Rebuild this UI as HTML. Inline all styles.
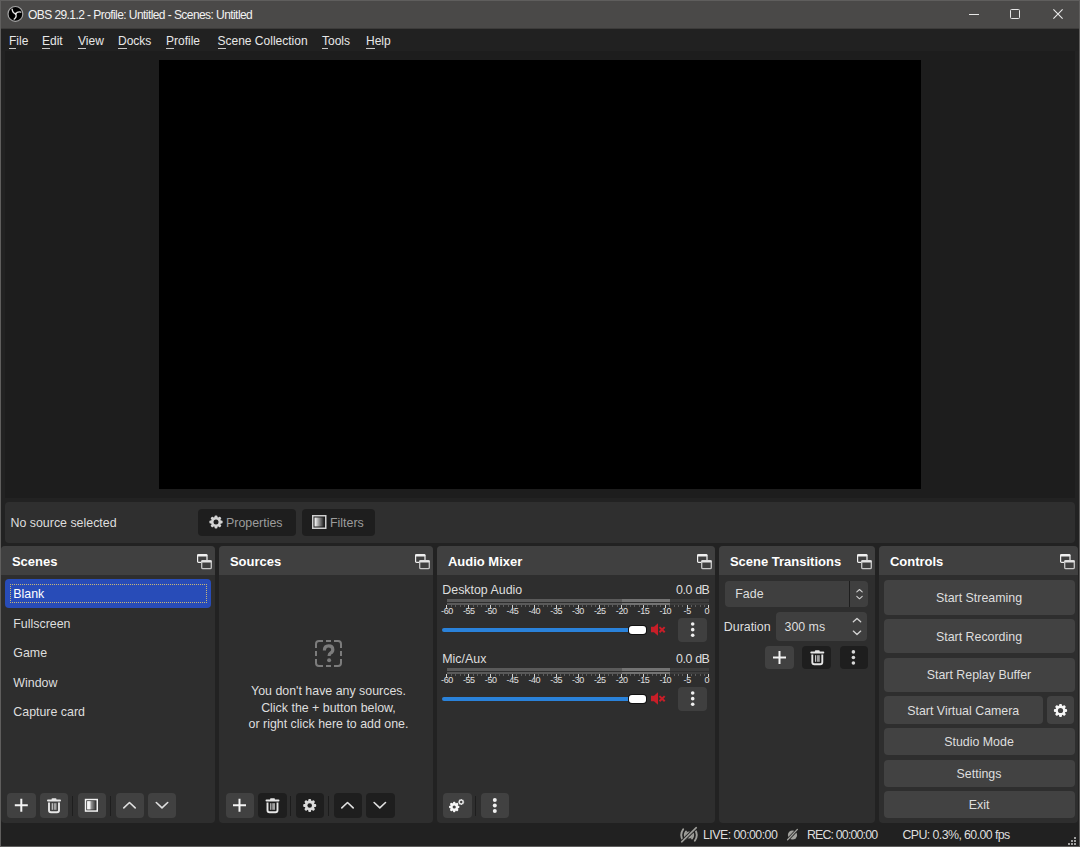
<!DOCTYPE html>
<html><head><meta charset="utf-8">
<style>
*{box-sizing:border-box;margin:0;padding:0}
html,body{width:1080px;height:847px;overflow:hidden;background:#222222}
body{position:relative;font-family:"Liberation Sans",sans-serif;color:#dedede;font-size:12.4px}
.a{position:absolute}
.t{position:absolute;white-space:nowrap}
</style></head><body>
<div class="a" style="left:0px;top:0px;width:1080px;height:28px;background:#4a4948"></div>
<div class="a" style="left:0px;top:28px;width:1080px;height:1px;background:#3c3b3a"></div>
<svg class="a" style="left:7px;top:5px;overflow:visible" width="18" height="19" viewBox="0 0 18 19"><g transform="translate(0.000 0.500)"><circle cx="8.4" cy="8.4" r="7.4" fill="#000" stroke="#a4a4a4" stroke-width="1.2"/>
<g fill="none" stroke="#e4e4e4" stroke-width="1.3" stroke-linecap="round">
<path d="M8.6 8.3 Q5.6 7.6 5.1 3.6"/>
<path d="M8.6 8.3 Q10.4 5.8 13.7 6.6"/>
<path d="M8.6 8.3 Q10.2 11.6 7.2 13.6"/>
</g><circle cx="8.6" cy="8.3" r="1.0" fill="#f0f0f0"/></g></svg>
<div class="t" style="left:28px;top:6.59px;font-size:12px;line-height:16px;color:#f2f2f2;letter-spacing:-0.57px">OBS 29.1.2 - Profile: Untitled - Scenes: Untitled</div>
<div class="a" style="left:969px;top:14px;width:10px;height:1px;background:#e6e6e6"></div>
<div class="a" style="left:1010px;top:9px;width:10px;height:10px;background:transparent;border-radius:1.5px;border:1px solid #e6e6e6"></div>
<svg class="a" style="left:1052px;top:8px;overflow:visible" width="13" height="13" viewBox="0 0 13 13"><g transform="translate(0.000 0.000)"><path d="M1.4 1.4L10.6 10.6M10.6 1.4L1.4 10.6" stroke="#ececec" stroke-width="1.1"/></g></svg>
<div class="a" style="left:0px;top:0px;width:1080px;height:847px;background:transparent;border:1px solid #5f5e5d;z-index:40"></div>
<div class="a" style="left:1px;top:29px;width:1078px;height:22px;background:#212121"></div>
<div class="t" style="left:9px;top:32.54px;font-size:12px;line-height:16px;color:#e8e8e8"><span style="border-bottom:1px solid #c8c8c8">F</span>ile</div>
<div class="t" style="left:42px;top:32.54px;font-size:12px;line-height:16px;color:#e8e8e8"><span style="border-bottom:1px solid #c8c8c8">E</span>dit</div>
<div class="t" style="left:78px;top:32.54px;font-size:12px;line-height:16px;color:#e8e8e8"><span style="border-bottom:1px solid #c8c8c8">V</span>iew</div>
<div class="t" style="left:118px;top:32.54px;font-size:12px;line-height:16px;color:#e8e8e8"><span style="border-bottom:1px solid #c8c8c8">D</span>ocks</div>
<div class="t" style="left:166px;top:32.54px;font-size:12px;line-height:16px;color:#e8e8e8"><span style="border-bottom:1px solid #c8c8c8">P</span>rofile</div>
<div class="t" style="left:217.5px;top:32.54px;font-size:12px;line-height:16px;color:#e8e8e8"><span style="border-bottom:1px solid #c8c8c8">S</span>cene Collection</div>
<div class="t" style="left:322px;top:32.54px;font-size:12px;line-height:16px;color:#e8e8e8"><span style="border-bottom:1px solid #c8c8c8">T</span>ools</div>
<div class="t" style="left:366px;top:32.54px;font-size:12px;line-height:16px;color:#e8e8e8"><span style="border-bottom:1px solid #c8c8c8">H</span>elp</div>
<div class="a" style="left:5px;top:51px;width:1070px;height:447px;background:#1d1d1d"></div>
<div class="a" style="left:159px;top:60px;width:762px;height:429px;background:#000000"></div>
<div class="a" style="left:5px;top:502px;width:1070px;height:41px;background:#2f2f2f;border-radius:4px"></div>
<div class="t" style="left:10.5px;top:514.70px;font-size:12.4px;line-height:16px">No source selected</div>
<div class="a" style="left:198px;top:509px;width:98px;height:27px;background:#1e1e1e;border-radius:4px"></div>
<div class="a" style="left:302px;top:509px;width:73px;height:27px;background:#1e1e1e;border-radius:4px"></div>
<svg class="a" style="left:209px;top:515px;overflow:visible" width="15" height="15" viewBox="0 0 15 15"><g transform="translate(0.000 0.000)"><circle cx="7" cy="7" r="5.0" fill="#d4d4d4"/><rect x="5.55" y="0.40" width="2.90" height="3.10" rx="1.02" fill="#d4d4d4" transform="rotate(0.0 7 7)"/><rect x="5.55" y="0.40" width="2.90" height="3.10" rx="1.02" fill="#d4d4d4" transform="rotate(45.0 7 7)"/><rect x="5.55" y="0.40" width="2.90" height="3.10" rx="1.02" fill="#d4d4d4" transform="rotate(90.0 7 7)"/><rect x="5.55" y="0.40" width="2.90" height="3.10" rx="1.02" fill="#d4d4d4" transform="rotate(135.0 7 7)"/><rect x="5.55" y="0.40" width="2.90" height="3.10" rx="1.02" fill="#d4d4d4" transform="rotate(180.0 7 7)"/><rect x="5.55" y="0.40" width="2.90" height="3.10" rx="1.02" fill="#d4d4d4" transform="rotate(225.0 7 7)"/><rect x="5.55" y="0.40" width="2.90" height="3.10" rx="1.02" fill="#d4d4d4" transform="rotate(270.0 7 7)"/><rect x="5.55" y="0.40" width="2.90" height="3.10" rx="1.02" fill="#d4d4d4" transform="rotate(315.0 7 7)"/><circle cx="7" cy="7" r="2.5" fill="#1e1e1e"/></g></svg>
<div class="t" style="left:226px;top:514.70px;font-size:12.4px;line-height:16px;color:#9c9c9c">Properties</div>
<svg class="a" style="left:312px;top:515px;overflow:visible" width="16" height="15" viewBox="0 0 16 15"><g transform="translate(0.000 0.000)"><defs><linearGradient id="fg" x1="0" x2="1"><stop offset="0" stop-color="#ffffff"/><stop offset="1" stop-color="#202020"/></linearGradient></defs><rect x="0.75" y="0.75" width="13" height="12.5" fill="none" stroke="#d0d0d0" stroke-width="1.5"/><rect x="2.5" y="2.5" width="9.5" height="9" fill="url(#fg)"/></g></svg>
<div class="t" style="left:330px;top:514.70px;font-size:12.4px;line-height:16px;color:#9c9c9c">Filters</div>
<div class="a" style="left:1px;top:546px;width:214px;height:277px;background:#2e2e2e;border-radius:4px;overflow:hidden"></div>
<div class="a" style="left:1px;top:546px;width:214px;height:29px;background:#404040;border-radius:4px 4px 0 0"></div>
<div class="t" style="left:11.9px;top:553.70px;font-size:13px;line-height:16px;color:#ffffff;font-weight:bold">Scenes</div>
<svg class="a" style="left:196px;top:553px;overflow:visible" width="18" height="18" viewBox="0 0 18 18"><g transform="translate(0.000 0.000)"><rect x="1.6" y="1.6" width="9.4" height="7.8" rx="1" fill="none" stroke="#f0f0f0" stroke-width="1.2"/><rect x="1.2" y="1.2" width="10.2" height="2.2" rx="0.8" fill="#f0f0f0"/><rect x="5.7" y="7.6" width="9.6" height="8" rx="1.2" fill="#404040" stroke="#c8c8c8" stroke-width="1.3"/><rect x="5.3" y="7.2" width="10.4" height="2.2" rx="0.8" fill="#e4e4e4"/></g></svg>
<div class="a" style="left:219px;top:546px;width:214px;height:277px;background:#2e2e2e;border-radius:4px;overflow:hidden"></div>
<div class="a" style="left:219px;top:546px;width:214px;height:29px;background:#404040;border-radius:4px 4px 0 0"></div>
<div class="t" style="left:229.9px;top:553.70px;font-size:13px;line-height:16px;color:#ffffff;font-weight:bold">Sources</div>
<svg class="a" style="left:414px;top:553px;overflow:visible" width="18" height="18" viewBox="0 0 18 18"><g transform="translate(0.000 0.000)"><rect x="1.6" y="1.6" width="9.4" height="7.8" rx="1" fill="none" stroke="#f0f0f0" stroke-width="1.2"/><rect x="1.2" y="1.2" width="10.2" height="2.2" rx="0.8" fill="#f0f0f0"/><rect x="5.7" y="7.6" width="9.6" height="8" rx="1.2" fill="#404040" stroke="#c8c8c8" stroke-width="1.3"/><rect x="5.3" y="7.2" width="10.4" height="2.2" rx="0.8" fill="#e4e4e4"/></g></svg>
<div class="a" style="left:437px;top:546px;width:278px;height:277px;background:#2e2e2e;border-radius:4px;overflow:hidden"></div>
<div class="a" style="left:437px;top:546px;width:278px;height:29px;background:#404040;border-radius:4px 4px 0 0"></div>
<div class="t" style="left:447.9px;top:553.70px;font-size:13px;line-height:16px;color:#ffffff;font-weight:bold">Audio Mixer</div>
<svg class="a" style="left:696px;top:553px;overflow:visible" width="18" height="18" viewBox="0 0 18 18"><g transform="translate(0.000 0.000)"><rect x="1.6" y="1.6" width="9.4" height="7.8" rx="1" fill="none" stroke="#f0f0f0" stroke-width="1.2"/><rect x="1.2" y="1.2" width="10.2" height="2.2" rx="0.8" fill="#f0f0f0"/><rect x="5.7" y="7.6" width="9.6" height="8" rx="1.2" fill="#404040" stroke="#c8c8c8" stroke-width="1.3"/><rect x="5.3" y="7.2" width="10.4" height="2.2" rx="0.8" fill="#e4e4e4"/></g></svg>
<div class="a" style="left:719px;top:546px;width:156px;height:277px;background:#2e2e2e;border-radius:4px;overflow:hidden"></div>
<div class="a" style="left:719px;top:546px;width:156px;height:29px;background:#404040;border-radius:4px 4px 0 0"></div>
<div class="t" style="left:729.9px;top:553.70px;font-size:13px;line-height:16px;color:#ffffff;font-weight:bold">Scene Transitions</div>
<svg class="a" style="left:856px;top:553px;overflow:visible" width="18" height="18" viewBox="0 0 18 18"><g transform="translate(0.000 0.000)"><rect x="1.6" y="1.6" width="9.4" height="7.8" rx="1" fill="none" stroke="#f0f0f0" stroke-width="1.2"/><rect x="1.2" y="1.2" width="10.2" height="2.2" rx="0.8" fill="#f0f0f0"/><rect x="5.7" y="7.6" width="9.6" height="8" rx="1.2" fill="#404040" stroke="#c8c8c8" stroke-width="1.3"/><rect x="5.3" y="7.2" width="10.4" height="2.2" rx="0.8" fill="#e4e4e4"/></g></svg>
<div class="a" style="left:879px;top:546px;width:199px;height:277px;background:#2e2e2e;border-radius:4px;overflow:hidden"></div>
<div class="a" style="left:879px;top:546px;width:199px;height:29px;background:#404040;border-radius:4px 4px 0 0"></div>
<div class="t" style="left:889.9px;top:553.70px;font-size:13px;line-height:16px;color:#ffffff;font-weight:bold">Controls</div>
<svg class="a" style="left:1059px;top:553px;overflow:visible" width="18" height="18" viewBox="0 0 18 18"><g transform="translate(0.000 0.000)"><rect x="1.6" y="1.6" width="9.4" height="7.8" rx="1" fill="none" stroke="#f0f0f0" stroke-width="1.2"/><rect x="1.2" y="1.2" width="10.2" height="2.2" rx="0.8" fill="#f0f0f0"/><rect x="5.7" y="7.6" width="9.6" height="8" rx="1.2" fill="#404040" stroke="#c8c8c8" stroke-width="1.3"/><rect x="5.3" y="7.2" width="10.4" height="2.2" rx="0.8" fill="#e4e4e4"/></g></svg>
<div class="a" style="left:5px;top:579px;width:206px;height:29px;background:#284cb8;border-radius:4px"></div>
<div class="a" style="left:10px;top:584px;width:197px;height:19px;background:transparent;border:1px dotted #c9b878"></div>
<div class="t" style="left:13.3px;top:586.40px;font-size:12.4px;line-height:16px;color:#ffffff">Blank</div>
<div class="t" style="left:13.3px;top:615.80px;font-size:12.4px;line-height:16px;color:#dedede">Fullscreen</div>
<div class="t" style="left:13.3px;top:645.20px;font-size:12.4px;line-height:16px;color:#dedede">Game</div>
<div class="t" style="left:13.3px;top:674.60px;font-size:12.4px;line-height:16px;color:#dedede">Window</div>
<div class="t" style="left:13.3px;top:704.00px;font-size:12.4px;line-height:16px;color:#dedede">Capture card</div>
<div class="a" style="left:7px;top:793px;width:29px;height:25px;background:#414141;border-radius:4px"></div>
<svg class="a" style="left:14px;top:798px;overflow:visible" width="15" height="15" viewBox="0 0 15 15"><g transform="translate(0.800 0.800)"><path d="M6.5 0V13M0 6.5H13" stroke="#f4f4f4" stroke-width="2"/></g></svg>
<div class="a" style="left:40px;top:793px;width:28px;height:25px;background:#414141;border-radius:4px"></div>
<svg class="a" style="left:46px;top:798px;overflow:visible" width="17" height="16" viewBox="0 0 17 16"><g transform="translate(0.500 0.000)"><defs><linearGradient id="tg46.5" x1="0" x2="1"><stop offset="0" stop-color="#888"/><stop offset="1" stop-color="#bbb"/></linearGradient></defs>
<rect x="0.5" y="1.6" width="14" height="2" rx="1" fill="#e6e6e6"/><rect x="5" y="0.2" width="5" height="2" rx="1" fill="#e6e6e6"/>
<path d="M2.5 4.5V12.2Q2.5 14.2 4.5 14.2H10.5Q12.5 14.2 12.5 12.2V4.5" fill="none" stroke="#e6e6e6" stroke-width="1.9"/>
<rect x="5.2" y="5.2" width="1.2" height="6.6" fill="#c8c8c8"/><rect x="7.2" y="5.2" width="2.8" height="6.6" fill="#a0a0a0"/></g></svg>
<div class="a" style="left:72px;top:796px;width:1px;height:20px;background:#1e1e1e"></div>
<div class="a" style="left:78px;top:793px;width:28px;height:25px;background:#414141;border-radius:4px"></div>
<svg class="a" style="left:84px;top:798px;overflow:visible" width="15" height="15" viewBox="0 0 15 15"><g transform="translate(0.800 0.800)"><defs><linearGradient id="fg2" x1="0" x2="1"><stop offset="0" stop-color="#ffffff"/><stop offset="0.3" stop-color="#f0f0f0"/><stop offset="0.5" stop-color="#909090"/><stop offset="1" stop-color="#3a3a3a"/></linearGradient></defs><rect x="0.75" y="0.75" width="11.7" height="11.5" fill="#303030" stroke="#f2f2f2" stroke-width="1.5"/><rect x="2.3" y="2.3" width="8.6" height="8.4" fill="url(#fg2)"/></g></svg>
<div class="a" style="left:110px;top:796px;width:1px;height:20px;background:#1e1e1e"></div>
<div class="a" style="left:115.5px;top:793px;width:28.5px;height:25px;background:#414141;border-radius:4px"></div>
<svg class="a" style="left:123px;top:801px;overflow:visible" width="14" height="9" viewBox="0 0 14 9"><g transform="translate(0.000 0.700)"><path d="M0.8 6.2L6.5 0.8L12.2 6.2" fill="none" stroke="#e0e0e0" stroke-width="1.6" stroke-linecap="round" stroke-linejoin="round"/></g></svg>
<div class="a" style="left:148px;top:793px;width:28px;height:25px;background:#414141;border-radius:4px"></div>
<svg class="a" style="left:155px;top:801px;overflow:visible" width="15" height="9" viewBox="0 0 15 9"><g transform="translate(0.500 0.700)"><path d="M0.8 0.8L6.5 6.2L12.2 0.8" fill="none" stroke="#e0e0e0" stroke-width="1.6" stroke-linecap="round" stroke-linejoin="round"/></g></svg>
<svg class="a" style="left:315px;top:640px;overflow:visible" width="28" height="28" viewBox="0 0 28 28"><g transform="translate(0.000 0.000)"><g fill="none" stroke="#7c7c7c" stroke-width="2">
<path d="M1 8V4Q1 1 4 1H8"/><path d="M19 1H23Q26 1 26 4V8"/><path d="M26 19V23Q26 26 23 26H19"/><path d="M8 26H4Q1 26 1 23V19"/>
<path d="M11 1H16"/><path d="M11 26H16"/><path d="M1 11V16"/><path d="M26 11V16"/>
</g>
<path d="M9.4 10.4Q9.4 5.9 13.6 5.9Q17.8 5.9 17.8 9.7Q17.8 11.9 15.5 13.1Q14.1 13.9 14.1 15.9" fill="none" stroke="#7c7c7c" stroke-width="3.2"/>
<circle cx="14.1" cy="20.2" r="2.0" fill="#7c7c7c"/></g></svg>
<div class="t" style="left:221.5px;width:214px;text-align:center;top:683.10px;font-size:12.4px;line-height:16px">You don't have any sources.</div>
<div class="t" style="left:221.5px;width:214px;text-align:center;top:699.55px;font-size:12.4px;line-height:16px">Click the + button below,</div>
<div class="t" style="left:221.5px;width:214px;text-align:center;top:716.00px;font-size:12.4px;line-height:16px">or right click here to add one.</div>
<div class="a" style="left:226px;top:793px;width:28px;height:25px;background:#414141;border-radius:4px"></div>
<svg class="a" style="left:233px;top:798px;overflow:visible" width="14" height="15" viewBox="0 0 14 15"><g transform="translate(0.000 0.800)"><path d="M6.5 0V13M0 6.5H13" stroke="#f4f4f4" stroke-width="2"/></g></svg>
<div class="a" style="left:258px;top:793px;width:28.5px;height:25px;background:#1e1e1e;border-radius:4px"></div>
<svg class="a" style="left:265px;top:798px;overflow:visible" width="16" height="16" viewBox="0 0 16 16"><g transform="translate(0.000 0.000)"><defs><linearGradient id="tg265" x1="0" x2="1"><stop offset="0" stop-color="#888"/><stop offset="1" stop-color="#bbb"/></linearGradient></defs>
<rect x="0.5" y="1.6" width="14" height="2" rx="1" fill="#e6e6e6"/><rect x="5" y="0.2" width="5" height="2" rx="1" fill="#e6e6e6"/>
<path d="M2.5 4.5V12.2Q2.5 14.2 4.5 14.2H10.5Q12.5 14.2 12.5 12.2V4.5" fill="none" stroke="#e6e6e6" stroke-width="1.9"/>
<rect x="5.2" y="5.2" width="1.2" height="6.6" fill="#c8c8c8"/><rect x="7.2" y="5.2" width="2.8" height="6.6" fill="#a0a0a0"/></g></svg>
<div class="a" style="left:290px;top:796px;width:1px;height:20px;background:#1c1c1c"></div>
<div class="a" style="left:296px;top:793px;width:28px;height:25px;background:#1e1e1e;border-radius:4px"></div>
<svg class="a" style="left:303px;top:799px;overflow:visible" width="15" height="15" viewBox="0 0 15 15"><g transform="translate(0.000 0.000)"><circle cx="6.7" cy="6.5" r="4.9" fill="#dcdcdc"/><rect x="5.27" y="0.00" width="2.86" height="3.10" rx="1.00" fill="#dcdcdc" transform="rotate(0.0 6.7 6.5)"/><rect x="5.27" y="0.00" width="2.86" height="3.10" rx="1.00" fill="#dcdcdc" transform="rotate(45.0 6.7 6.5)"/><rect x="5.27" y="0.00" width="2.86" height="3.10" rx="1.00" fill="#dcdcdc" transform="rotate(90.0 6.7 6.5)"/><rect x="5.27" y="0.00" width="2.86" height="3.10" rx="1.00" fill="#dcdcdc" transform="rotate(135.0 6.7 6.5)"/><rect x="5.27" y="0.00" width="2.86" height="3.10" rx="1.00" fill="#dcdcdc" transform="rotate(180.0 6.7 6.5)"/><rect x="5.27" y="0.00" width="2.86" height="3.10" rx="1.00" fill="#dcdcdc" transform="rotate(225.0 6.7 6.5)"/><rect x="5.27" y="0.00" width="2.86" height="3.10" rx="1.00" fill="#dcdcdc" transform="rotate(270.0 6.7 6.5)"/><rect x="5.27" y="0.00" width="2.86" height="3.10" rx="1.00" fill="#dcdcdc" transform="rotate(315.0 6.7 6.5)"/><circle cx="6.7" cy="6.5" r="2.3" fill="#1e1e1e"/></g></svg>
<div class="a" style="left:328px;top:796px;width:1px;height:20px;background:#1c1c1c"></div>
<div class="a" style="left:334px;top:793px;width:28px;height:25px;background:#1e1e1e;border-radius:4px"></div>
<svg class="a" style="left:341px;top:801px;overflow:visible" width="14" height="9" viewBox="0 0 14 9"><g transform="translate(0.000 0.700)"><path d="M0.8 6.2L6.5 0.8L12.2 6.2" fill="none" stroke="#e0e0e0" stroke-width="1.6" stroke-linecap="round" stroke-linejoin="round"/></g></svg>
<div class="a" style="left:366px;top:793px;width:28.5px;height:25px;background:#1e1e1e;border-radius:4px"></div>
<svg class="a" style="left:373px;top:801px;overflow:visible" width="15" height="9" viewBox="0 0 15 9"><g transform="translate(0.300 0.700)"><path d="M0.8 0.8L6.5 6.2L12.2 0.8" fill="none" stroke="#e0e0e0" stroke-width="1.6" stroke-linecap="round" stroke-linejoin="round"/></g></svg>
<div class="t" style="left:442.3px;top:581.70px;font-size:12.4px;line-height:16px">Desktop Audio</div>
<div class="t" style="left:609px;width:100.5px;text-align:right;top:581.70px;font-size:12.4px;line-height:16px;letter-spacing:-0.4px">0.0 dB</div>
<div class="a" style="left:447px;top:599px;width:175px;height:3px;background:#5a5a5a"></div>
<div class="a" style="left:622px;top:599px;width:48px;height:3px;background:#737373"></div>
<div class="a" style="left:670px;top:599px;width:39px;height:3px;background:#3d3d3d"></div>
<div class="a" style="left:447px;top:603px;width:175px;height:2px;background:#5a5a5a"></div>
<div class="a" style="left:622px;top:603px;width:48px;height:2px;background:#737373"></div>
<div class="a" style="left:670px;top:603px;width:39px;height:2px;background:#3d3d3d"></div>
<div class="a" style="left:708px;top:605px;width:1px;height:3px;background:#cfcfcf"></div>
<div class="a" style="left:704px;top:605px;width:1px;height:2px;background:#5c5c5c"></div>
<div class="a" style="left:700px;top:605px;width:1px;height:2px;background:#5c5c5c"></div>
<div class="a" style="left:695px;top:605px;width:1px;height:2px;background:#5c5c5c"></div>
<div class="a" style="left:691px;top:605px;width:1px;height:2px;background:#5c5c5c"></div>
<div class="a" style="left:687px;top:605px;width:1px;height:3px;background:#cfcfcf"></div>
<div class="a" style="left:682px;top:605px;width:1px;height:2px;background:#5c5c5c"></div>
<div class="a" style="left:678px;top:605px;width:1px;height:2px;background:#5c5c5c"></div>
<div class="a" style="left:674px;top:605px;width:1px;height:2px;background:#5c5c5c"></div>
<div class="a" style="left:669px;top:605px;width:1px;height:2px;background:#5c5c5c"></div>
<div class="a" style="left:665px;top:605px;width:1px;height:3px;background:#cfcfcf"></div>
<div class="a" style="left:660px;top:605px;width:1px;height:2px;background:#5c5c5c"></div>
<div class="a" style="left:656px;top:605px;width:1px;height:2px;background:#5c5c5c"></div>
<div class="a" style="left:652px;top:605px;width:1px;height:2px;background:#5c5c5c"></div>
<div class="a" style="left:647px;top:605px;width:1px;height:2px;background:#5c5c5c"></div>
<div class="a" style="left:643px;top:605px;width:1px;height:3px;background:#cfcfcf"></div>
<div class="a" style="left:639px;top:605px;width:1px;height:2px;background:#5c5c5c"></div>
<div class="a" style="left:634px;top:605px;width:1px;height:2px;background:#5c5c5c"></div>
<div class="a" style="left:630px;top:605px;width:1px;height:2px;background:#5c5c5c"></div>
<div class="a" style="left:626px;top:605px;width:1px;height:2px;background:#5c5c5c"></div>
<div class="a" style="left:621px;top:605px;width:1px;height:3px;background:#cfcfcf"></div>
<div class="a" style="left:617px;top:605px;width:1px;height:2px;background:#5c5c5c"></div>
<div class="a" style="left:612px;top:605px;width:1px;height:2px;background:#5c5c5c"></div>
<div class="a" style="left:608px;top:605px;width:1px;height:2px;background:#5c5c5c"></div>
<div class="a" style="left:604px;top:605px;width:1px;height:2px;background:#5c5c5c"></div>
<div class="a" style="left:599px;top:605px;width:1px;height:3px;background:#cfcfcf"></div>
<div class="a" style="left:595px;top:605px;width:1px;height:2px;background:#5c5c5c"></div>
<div class="a" style="left:591px;top:605px;width:1px;height:2px;background:#5c5c5c"></div>
<div class="a" style="left:586px;top:605px;width:1px;height:2px;background:#5c5c5c"></div>
<div class="a" style="left:582px;top:605px;width:1px;height:2px;background:#5c5c5c"></div>
<div class="a" style="left:578px;top:605px;width:1px;height:3px;background:#cfcfcf"></div>
<div class="a" style="left:573px;top:605px;width:1px;height:2px;background:#5c5c5c"></div>
<div class="a" style="left:569px;top:605px;width:1px;height:2px;background:#5c5c5c"></div>
<div class="a" style="left:564px;top:605px;width:1px;height:2px;background:#5c5c5c"></div>
<div class="a" style="left:560px;top:605px;width:1px;height:2px;background:#5c5c5c"></div>
<div class="a" style="left:556px;top:605px;width:1px;height:3px;background:#cfcfcf"></div>
<div class="a" style="left:551px;top:605px;width:1px;height:2px;background:#5c5c5c"></div>
<div class="a" style="left:547px;top:605px;width:1px;height:2px;background:#5c5c5c"></div>
<div class="a" style="left:543px;top:605px;width:1px;height:2px;background:#5c5c5c"></div>
<div class="a" style="left:538px;top:605px;width:1px;height:2px;background:#5c5c5c"></div>
<div class="a" style="left:534px;top:605px;width:1px;height:3px;background:#cfcfcf"></div>
<div class="a" style="left:529px;top:605px;width:1px;height:2px;background:#5c5c5c"></div>
<div class="a" style="left:525px;top:605px;width:1px;height:2px;background:#5c5c5c"></div>
<div class="a" style="left:521px;top:605px;width:1px;height:2px;background:#5c5c5c"></div>
<div class="a" style="left:516px;top:605px;width:1px;height:2px;background:#5c5c5c"></div>
<div class="a" style="left:512px;top:605px;width:1px;height:3px;background:#cfcfcf"></div>
<div class="a" style="left:508px;top:605px;width:1px;height:2px;background:#5c5c5c"></div>
<div class="a" style="left:503px;top:605px;width:1px;height:2px;background:#5c5c5c"></div>
<div class="a" style="left:499px;top:605px;width:1px;height:2px;background:#5c5c5c"></div>
<div class="a" style="left:495px;top:605px;width:1px;height:2px;background:#5c5c5c"></div>
<div class="a" style="left:490px;top:605px;width:1px;height:3px;background:#cfcfcf"></div>
<div class="a" style="left:486px;top:605px;width:1px;height:2px;background:#5c5c5c"></div>
<div class="a" style="left:481px;top:605px;width:1px;height:2px;background:#5c5c5c"></div>
<div class="a" style="left:477px;top:605px;width:1px;height:2px;background:#5c5c5c"></div>
<div class="a" style="left:473px;top:605px;width:1px;height:2px;background:#5c5c5c"></div>
<div class="a" style="left:468px;top:605px;width:1px;height:3px;background:#cfcfcf"></div>
<div class="a" style="left:464px;top:605px;width:1px;height:2px;background:#5c5c5c"></div>
<div class="a" style="left:460px;top:605px;width:1px;height:2px;background:#5c5c5c"></div>
<div class="a" style="left:455px;top:605px;width:1px;height:2px;background:#5c5c5c"></div>
<div class="a" style="left:451px;top:605px;width:1px;height:2px;background:#5c5c5c"></div>
<div class="a" style="left:446px;top:605px;width:1px;height:3px;background:#cfcfcf"></div>
<div class="t" style="left:689.0px;width:20px;text-align:right;top:607.2px;font-size:9px;line-height:9px;color:#e0e0e0;letter-spacing:-0.4px">0</div>
<div class="t" style="left:672.2px;width:30px;text-align:center;top:607.2px;font-size:9px;line-height:9px;color:#e0e0e0;letter-spacing:-0.4px">-5</div>
<div class="t" style="left:650.3px;width:30px;text-align:center;top:607.2px;font-size:9px;line-height:9px;color:#e0e0e0;letter-spacing:-0.4px">-10</div>
<div class="t" style="left:628.5px;width:30px;text-align:center;top:607.2px;font-size:9px;line-height:9px;color:#e0e0e0;letter-spacing:-0.4px">-15</div>
<div class="t" style="left:606.7px;width:30px;text-align:center;top:607.2px;font-size:9px;line-height:9px;color:#e0e0e0;letter-spacing:-0.4px">-20</div>
<div class="t" style="left:584.8px;width:30px;text-align:center;top:607.2px;font-size:9px;line-height:9px;color:#e0e0e0;letter-spacing:-0.4px">-25</div>
<div class="t" style="left:563.0px;width:30px;text-align:center;top:607.2px;font-size:9px;line-height:9px;color:#e0e0e0;letter-spacing:-0.4px">-30</div>
<div class="t" style="left:541.2px;width:30px;text-align:center;top:607.2px;font-size:9px;line-height:9px;color:#e0e0e0;letter-spacing:-0.4px">-35</div>
<div class="t" style="left:519.3px;width:30px;text-align:center;top:607.2px;font-size:9px;line-height:9px;color:#e0e0e0;letter-spacing:-0.4px">-40</div>
<div class="t" style="left:497.5px;width:30px;text-align:center;top:607.2px;font-size:9px;line-height:9px;color:#e0e0e0;letter-spacing:-0.4px">-45</div>
<div class="t" style="left:475.7px;width:30px;text-align:center;top:607.2px;font-size:9px;line-height:9px;color:#e0e0e0;letter-spacing:-0.4px">-50</div>
<div class="t" style="left:453.8px;width:30px;text-align:center;top:607.2px;font-size:9px;line-height:9px;color:#e0e0e0;letter-spacing:-0.4px">-55</div>
<div class="t" style="left:432.0px;width:30px;text-align:center;top:607.2px;font-size:9px;line-height:9px;color:#e0e0e0;letter-spacing:-0.4px">-60</div>
<div class="a" style="left:442px;top:628px;width:190px;height:4px;background:#2a82da;border-radius:2px"></div>
<div class="a" style="left:628.5px;top:625.5px;width:17px;height:8.5px;background:#ffffff;border-radius:3px;box-shadow:0 0 0 1px #111"></div>
<svg class="a" style="left:650px;top:623px;overflow:visible" width="17" height="14" viewBox="0 0 17 14"><g transform="translate(0.000 0.000)"><path d="M1 3.8H4L8 0.3V12.7L4 9.2H1Z" fill="#c81e28"/><path d="M9.5 4.1L14.7 9.3M14.7 4.1L9.5 9.3" stroke="#c81e28" stroke-width="2"/></g></svg>
<div class="a" style="left:678px;top:618px;width:29px;height:23.5px;background:#3f3f3f;border-radius:4px"></div>
<svg class="a" style="left:687px;top:619px;overflow:visible" width="12" height="23" viewBox="0 0 12 23"><g transform="translate(0.700 0.000)"><circle cx="5" cy="5.0" r="1.8" fill="#f0f0f0"/><circle cx="5" cy="10.65" r="1.8" fill="#f0f0f0"/><circle cx="5" cy="16.3" r="1.8" fill="#f0f0f0"/></g></svg>
<div class="t" style="left:442.3px;top:650.70px;font-size:12.4px;line-height:16px">Mic/Aux</div>
<div class="t" style="left:609px;width:100.5px;text-align:right;top:650.70px;font-size:12.4px;line-height:16px;letter-spacing:-0.4px">0.0 dB</div>
<div class="a" style="left:447px;top:668px;width:175px;height:3px;background:#5a5a5a"></div>
<div class="a" style="left:622px;top:668px;width:48px;height:3px;background:#737373"></div>
<div class="a" style="left:670px;top:668px;width:39px;height:3px;background:#3d3d3d"></div>
<div class="a" style="left:447px;top:672px;width:175px;height:2px;background:#5a5a5a"></div>
<div class="a" style="left:622px;top:672px;width:48px;height:2px;background:#737373"></div>
<div class="a" style="left:670px;top:672px;width:39px;height:2px;background:#3d3d3d"></div>
<div class="a" style="left:708px;top:674px;width:1px;height:3px;background:#cfcfcf"></div>
<div class="a" style="left:704px;top:674px;width:1px;height:2px;background:#5c5c5c"></div>
<div class="a" style="left:700px;top:674px;width:1px;height:2px;background:#5c5c5c"></div>
<div class="a" style="left:695px;top:674px;width:1px;height:2px;background:#5c5c5c"></div>
<div class="a" style="left:691px;top:674px;width:1px;height:2px;background:#5c5c5c"></div>
<div class="a" style="left:687px;top:674px;width:1px;height:3px;background:#cfcfcf"></div>
<div class="a" style="left:682px;top:674px;width:1px;height:2px;background:#5c5c5c"></div>
<div class="a" style="left:678px;top:674px;width:1px;height:2px;background:#5c5c5c"></div>
<div class="a" style="left:674px;top:674px;width:1px;height:2px;background:#5c5c5c"></div>
<div class="a" style="left:669px;top:674px;width:1px;height:2px;background:#5c5c5c"></div>
<div class="a" style="left:665px;top:674px;width:1px;height:3px;background:#cfcfcf"></div>
<div class="a" style="left:660px;top:674px;width:1px;height:2px;background:#5c5c5c"></div>
<div class="a" style="left:656px;top:674px;width:1px;height:2px;background:#5c5c5c"></div>
<div class="a" style="left:652px;top:674px;width:1px;height:2px;background:#5c5c5c"></div>
<div class="a" style="left:647px;top:674px;width:1px;height:2px;background:#5c5c5c"></div>
<div class="a" style="left:643px;top:674px;width:1px;height:3px;background:#cfcfcf"></div>
<div class="a" style="left:639px;top:674px;width:1px;height:2px;background:#5c5c5c"></div>
<div class="a" style="left:634px;top:674px;width:1px;height:2px;background:#5c5c5c"></div>
<div class="a" style="left:630px;top:674px;width:1px;height:2px;background:#5c5c5c"></div>
<div class="a" style="left:626px;top:674px;width:1px;height:2px;background:#5c5c5c"></div>
<div class="a" style="left:621px;top:674px;width:1px;height:3px;background:#cfcfcf"></div>
<div class="a" style="left:617px;top:674px;width:1px;height:2px;background:#5c5c5c"></div>
<div class="a" style="left:612px;top:674px;width:1px;height:2px;background:#5c5c5c"></div>
<div class="a" style="left:608px;top:674px;width:1px;height:2px;background:#5c5c5c"></div>
<div class="a" style="left:604px;top:674px;width:1px;height:2px;background:#5c5c5c"></div>
<div class="a" style="left:599px;top:674px;width:1px;height:3px;background:#cfcfcf"></div>
<div class="a" style="left:595px;top:674px;width:1px;height:2px;background:#5c5c5c"></div>
<div class="a" style="left:591px;top:674px;width:1px;height:2px;background:#5c5c5c"></div>
<div class="a" style="left:586px;top:674px;width:1px;height:2px;background:#5c5c5c"></div>
<div class="a" style="left:582px;top:674px;width:1px;height:2px;background:#5c5c5c"></div>
<div class="a" style="left:578px;top:674px;width:1px;height:3px;background:#cfcfcf"></div>
<div class="a" style="left:573px;top:674px;width:1px;height:2px;background:#5c5c5c"></div>
<div class="a" style="left:569px;top:674px;width:1px;height:2px;background:#5c5c5c"></div>
<div class="a" style="left:564px;top:674px;width:1px;height:2px;background:#5c5c5c"></div>
<div class="a" style="left:560px;top:674px;width:1px;height:2px;background:#5c5c5c"></div>
<div class="a" style="left:556px;top:674px;width:1px;height:3px;background:#cfcfcf"></div>
<div class="a" style="left:551px;top:674px;width:1px;height:2px;background:#5c5c5c"></div>
<div class="a" style="left:547px;top:674px;width:1px;height:2px;background:#5c5c5c"></div>
<div class="a" style="left:543px;top:674px;width:1px;height:2px;background:#5c5c5c"></div>
<div class="a" style="left:538px;top:674px;width:1px;height:2px;background:#5c5c5c"></div>
<div class="a" style="left:534px;top:674px;width:1px;height:3px;background:#cfcfcf"></div>
<div class="a" style="left:529px;top:674px;width:1px;height:2px;background:#5c5c5c"></div>
<div class="a" style="left:525px;top:674px;width:1px;height:2px;background:#5c5c5c"></div>
<div class="a" style="left:521px;top:674px;width:1px;height:2px;background:#5c5c5c"></div>
<div class="a" style="left:516px;top:674px;width:1px;height:2px;background:#5c5c5c"></div>
<div class="a" style="left:512px;top:674px;width:1px;height:3px;background:#cfcfcf"></div>
<div class="a" style="left:508px;top:674px;width:1px;height:2px;background:#5c5c5c"></div>
<div class="a" style="left:503px;top:674px;width:1px;height:2px;background:#5c5c5c"></div>
<div class="a" style="left:499px;top:674px;width:1px;height:2px;background:#5c5c5c"></div>
<div class="a" style="left:495px;top:674px;width:1px;height:2px;background:#5c5c5c"></div>
<div class="a" style="left:490px;top:674px;width:1px;height:3px;background:#cfcfcf"></div>
<div class="a" style="left:486px;top:674px;width:1px;height:2px;background:#5c5c5c"></div>
<div class="a" style="left:481px;top:674px;width:1px;height:2px;background:#5c5c5c"></div>
<div class="a" style="left:477px;top:674px;width:1px;height:2px;background:#5c5c5c"></div>
<div class="a" style="left:473px;top:674px;width:1px;height:2px;background:#5c5c5c"></div>
<div class="a" style="left:468px;top:674px;width:1px;height:3px;background:#cfcfcf"></div>
<div class="a" style="left:464px;top:674px;width:1px;height:2px;background:#5c5c5c"></div>
<div class="a" style="left:460px;top:674px;width:1px;height:2px;background:#5c5c5c"></div>
<div class="a" style="left:455px;top:674px;width:1px;height:2px;background:#5c5c5c"></div>
<div class="a" style="left:451px;top:674px;width:1px;height:2px;background:#5c5c5c"></div>
<div class="a" style="left:446px;top:674px;width:1px;height:3px;background:#cfcfcf"></div>
<div class="t" style="left:689.0px;width:20px;text-align:right;top:676.2px;font-size:9px;line-height:9px;color:#e0e0e0;letter-spacing:-0.4px">0</div>
<div class="t" style="left:672.2px;width:30px;text-align:center;top:676.2px;font-size:9px;line-height:9px;color:#e0e0e0;letter-spacing:-0.4px">-5</div>
<div class="t" style="left:650.3px;width:30px;text-align:center;top:676.2px;font-size:9px;line-height:9px;color:#e0e0e0;letter-spacing:-0.4px">-10</div>
<div class="t" style="left:628.5px;width:30px;text-align:center;top:676.2px;font-size:9px;line-height:9px;color:#e0e0e0;letter-spacing:-0.4px">-15</div>
<div class="t" style="left:606.7px;width:30px;text-align:center;top:676.2px;font-size:9px;line-height:9px;color:#e0e0e0;letter-spacing:-0.4px">-20</div>
<div class="t" style="left:584.8px;width:30px;text-align:center;top:676.2px;font-size:9px;line-height:9px;color:#e0e0e0;letter-spacing:-0.4px">-25</div>
<div class="t" style="left:563.0px;width:30px;text-align:center;top:676.2px;font-size:9px;line-height:9px;color:#e0e0e0;letter-spacing:-0.4px">-30</div>
<div class="t" style="left:541.2px;width:30px;text-align:center;top:676.2px;font-size:9px;line-height:9px;color:#e0e0e0;letter-spacing:-0.4px">-35</div>
<div class="t" style="left:519.3px;width:30px;text-align:center;top:676.2px;font-size:9px;line-height:9px;color:#e0e0e0;letter-spacing:-0.4px">-40</div>
<div class="t" style="left:497.5px;width:30px;text-align:center;top:676.2px;font-size:9px;line-height:9px;color:#e0e0e0;letter-spacing:-0.4px">-45</div>
<div class="t" style="left:475.7px;width:30px;text-align:center;top:676.2px;font-size:9px;line-height:9px;color:#e0e0e0;letter-spacing:-0.4px">-50</div>
<div class="t" style="left:453.8px;width:30px;text-align:center;top:676.2px;font-size:9px;line-height:9px;color:#e0e0e0;letter-spacing:-0.4px">-55</div>
<div class="t" style="left:432.0px;width:30px;text-align:center;top:676.2px;font-size:9px;line-height:9px;color:#e0e0e0;letter-spacing:-0.4px">-60</div>
<div class="a" style="left:442px;top:697px;width:190px;height:4px;background:#2a82da;border-radius:2px"></div>
<div class="a" style="left:628.5px;top:694.5px;width:17px;height:8.5px;background:#ffffff;border-radius:3px;box-shadow:0 0 0 1px #111"></div>
<svg class="a" style="left:650px;top:692px;overflow:visible" width="17" height="14" viewBox="0 0 17 14"><g transform="translate(0.000 0.000)"><path d="M1 3.8H4L8 0.3V12.7L4 9.2H1Z" fill="#c81e28"/><path d="M9.5 4.1L14.7 9.3M14.7 4.1L9.5 9.3" stroke="#c81e28" stroke-width="2"/></g></svg>
<div class="a" style="left:678px;top:687px;width:29px;height:23.5px;background:#3f3f3f;border-radius:4px"></div>
<svg class="a" style="left:687px;top:688px;overflow:visible" width="12" height="23" viewBox="0 0 12 23"><g transform="translate(0.700 0.000)"><circle cx="5" cy="5.0" r="1.8" fill="#f0f0f0"/><circle cx="5" cy="10.65" r="1.8" fill="#f0f0f0"/><circle cx="5" cy="16.3" r="1.8" fill="#f0f0f0"/></g></svg>
<div class="a" style="left:443px;top:793px;width:28.5px;height:25px;background:#414141;border-radius:4px"></div>
<svg class="a" style="left:448px;top:798px;overflow:visible" width="19" height="17" viewBox="0 0 19 17"><g transform="translate(0.000 0.000)"><circle cx="6.2" cy="9" r="3.9" fill="#f6f6f6"/><rect x="5.06" y="3.80" width="2.29" height="2.80" rx="0.80" fill="#f6f6f6" transform="rotate(0.0 6.2 9)"/><rect x="5.06" y="3.80" width="2.29" height="2.80" rx="0.80" fill="#f6f6f6" transform="rotate(45.0 6.2 9)"/><rect x="5.06" y="3.80" width="2.29" height="2.80" rx="0.80" fill="#f6f6f6" transform="rotate(90.0 6.2 9)"/><rect x="5.06" y="3.80" width="2.29" height="2.80" rx="0.80" fill="#f6f6f6" transform="rotate(135.0 6.2 9)"/><rect x="5.06" y="3.80" width="2.29" height="2.80" rx="0.80" fill="#f6f6f6" transform="rotate(180.0 6.2 9)"/><rect x="5.06" y="3.80" width="2.29" height="2.80" rx="0.80" fill="#f6f6f6" transform="rotate(225.0 6.2 9)"/><rect x="5.06" y="3.80" width="2.29" height="2.80" rx="0.80" fill="#f6f6f6" transform="rotate(270.0 6.2 9)"/><rect x="5.06" y="3.80" width="2.29" height="2.80" rx="0.80" fill="#f6f6f6" transform="rotate(315.0 6.2 9)"/><circle cx="6.2" cy="9" r="1.6" fill="#414141"/><circle cx="13.2" cy="4.0" r="2.3" fill="#e6e6e6"/><rect x="12.40" y="1.00" width="1.60" height="2.20" rx="0.56" fill="#e6e6e6" transform="rotate(0.0 13.2 4.0)"/><rect x="12.40" y="1.00" width="1.60" height="2.20" rx="0.56" fill="#e6e6e6" transform="rotate(45.0 13.2 4.0)"/><rect x="12.40" y="1.00" width="1.60" height="2.20" rx="0.56" fill="#e6e6e6" transform="rotate(90.0 13.2 4.0)"/><rect x="12.40" y="1.00" width="1.60" height="2.20" rx="0.56" fill="#e6e6e6" transform="rotate(135.0 13.2 4.0)"/><rect x="12.40" y="1.00" width="1.60" height="2.20" rx="0.56" fill="#e6e6e6" transform="rotate(180.0 13.2 4.0)"/><rect x="12.40" y="1.00" width="1.60" height="2.20" rx="0.56" fill="#e6e6e6" transform="rotate(225.0 13.2 4.0)"/><rect x="12.40" y="1.00" width="1.60" height="2.20" rx="0.56" fill="#e6e6e6" transform="rotate(270.0 13.2 4.0)"/><rect x="12.40" y="1.00" width="1.60" height="2.20" rx="0.56" fill="#e6e6e6" transform="rotate(315.0 13.2 4.0)"/><circle cx="13.2" cy="4.0" r="1.2" fill="#414141"/></g></svg>
<div class="a" style="left:475px;top:796px;width:1px;height:20px;background:#1e1e1e"></div>
<div class="a" style="left:481px;top:793px;width:28px;height:25px;background:#414141;border-radius:4px"></div>
<svg class="a" style="left:489px;top:794px;overflow:visible" width="12" height="23" viewBox="0 0 12 23"><g transform="translate(0.800 0.900)"><circle cx="5" cy="5.0" r="2.0" fill="#f0f0f0"/><circle cx="5" cy="10.55" r="2.0" fill="#f0f0f0"/><circle cx="5" cy="16.1" r="2.0" fill="#f0f0f0"/></g></svg>
<div class="a" style="left:725px;top:581px;width:143px;height:25.5px;background:#3f3f3f;border-radius:4px"></div>
<div class="a" style="left:849px;top:581px;width:1px;height:25.5px;background:#1e1e1e"></div>
<div class="t" style="left:735.3px;top:586.00px;font-size:12.4px;line-height:16px">Fade</div>
<svg class="a" style="left:856px;top:588px;overflow:visible" width="8" height="6" viewBox="0 0 8 6"><g transform="translate(0.000 0.700)"><path d="M0.8 3.2L3.5 0.8L6.2 3.2" fill="none" stroke="#d0d0d0" stroke-width="1.1" stroke-linecap="round" stroke-linejoin="round"/></g></svg>
<svg class="a" style="left:856px;top:595px;overflow:visible" width="8" height="6" viewBox="0 0 8 6"><g transform="translate(0.000 0.600)"><path d="M0.8 0.8L3.5 3.2L6.2 0.8" fill="none" stroke="#d0d0d0" stroke-width="1.1" stroke-linecap="round" stroke-linejoin="round"/></g></svg>
<div class="t" style="left:723.8px;top:619.10px;font-size:12.4px;line-height:16px">Duration</div>
<div class="a" style="left:776px;top:612.3px;width:91px;height:28.5px;background:#3f3f3f;border-radius:4px"></div>
<div class="t" style="left:784.5px;top:618.60px;font-size:12.4px;line-height:16px">300 ms</div>
<svg class="a" style="left:852px;top:617px;overflow:visible" width="11" height="7" viewBox="0 0 11 7"><g transform="translate(0.500 0.600)"><path d="M0.8 4.2L4.5 0.8L8.2 4.2" fill="none" stroke="#d4d4d4" stroke-width="1.3" stroke-linecap="round" stroke-linejoin="round"/></g></svg>
<svg class="a" style="left:852px;top:630px;overflow:visible" width="11" height="7" viewBox="0 0 11 7"><g transform="translate(0.500 0.300)"><path d="M0.8 0.8L4.5 4.2L8.2 0.8" fill="none" stroke="#d4d4d4" stroke-width="1.3" stroke-linecap="round" stroke-linejoin="round"/></g></svg>
<div class="a" style="left:765px;top:645.5px;width:29px;height:23.5px;background:#414141;border-radius:4px"></div>
<svg class="a" style="left:773px;top:651px;overflow:visible" width="14" height="14" viewBox="0 0 14 14"><g transform="translate(0.000 0.000)"><path d="M6.5 0V13M0 6.5H13" stroke="#f4f4f4" stroke-width="2"/></g></svg>
<div class="a" style="left:802px;top:645.5px;width:29px;height:23.5px;background:#1e1e1e;border-radius:4px"></div>
<svg class="a" style="left:809px;top:650px;overflow:visible" width="17" height="16" viewBox="0 0 17 16"><g transform="translate(0.800 0.000)"><defs><linearGradient id="tg809.8" x1="0" x2="1"><stop offset="0" stop-color="#888"/><stop offset="1" stop-color="#bbb"/></linearGradient></defs>
<rect x="0.5" y="1.6" width="14" height="2" rx="1" fill="#e6e6e6"/><rect x="5" y="0.2" width="5" height="2" rx="1" fill="#e6e6e6"/>
<path d="M2.5 4.5V12.2Q2.5 14.2 4.5 14.2H10.5Q12.5 14.2 12.5 12.2V4.5" fill="none" stroke="#e6e6e6" stroke-width="1.9"/>
<rect x="5.2" y="5.2" width="1.2" height="6.6" fill="#c8c8c8"/><rect x="7.2" y="5.2" width="2.8" height="6.6" fill="#a0a0a0"/></g></svg>
<div class="a" style="left:839.5px;top:645.5px;width:28.5px;height:23.5px;background:#1e1e1e;border-radius:4px"></div>
<svg class="a" style="left:848px;top:646px;overflow:visible" width="12" height="23" viewBox="0 0 12 23"><g transform="translate(0.400 0.900)"><circle cx="5" cy="5.0" r="1.8" fill="#d8d8d8"/><circle cx="5" cy="10.55" r="1.8" fill="#d8d8d8"/><circle cx="5" cy="16.1" r="1.8" fill="#d8d8d8"/></g></svg>
<div class="a" style="left:883.5px;top:580.3px;width:191px;height:34.7px;background:#424242;border-radius:4px"></div>
<div class="t" style="left:883.5px;width:191px;text-align:center;top:590.12px;font-size:12.4px;line-height:16px">Start Streaming</div>
<div class="a" style="left:883.5px;top:618.7px;width:191px;height:34.7px;background:#424242;border-radius:4px"></div>
<div class="t" style="left:883.5px;width:191px;text-align:center;top:628.52px;font-size:12.4px;line-height:16px">Start Recording</div>
<div class="a" style="left:883.5px;top:657.6px;width:191px;height:34.7px;background:#424242;border-radius:4px"></div>
<div class="t" style="left:883.5px;width:191px;text-align:center;top:667.42px;font-size:12.4px;line-height:16px">Start Replay Buffer</div>
<div class="a" style="left:883.5px;top:696.4px;width:159.5px;height:27.5px;background:#424242;border-radius:4px"></div>
<div class="t" style="left:883.5px;width:159.5px;text-align:center;top:702.62px;font-size:12.4px;line-height:16px">Start Virtual Camera</div>
<div class="a" style="left:1047px;top:696.4px;width:27.3px;height:27.5px;background:#424242;border-radius:4px"></div>
<svg class="a" style="left:1053px;top:703px;overflow:visible" width="16" height="16" viewBox="0 0 16 16"><g transform="translate(0.500 0.500)"><circle cx="7" cy="7" r="5.0" fill="#f6f6f6"/><rect x="5.55" y="0.40" width="2.90" height="3.10" rx="1.02" fill="#f6f6f6" transform="rotate(0.0 7 7)"/><rect x="5.55" y="0.40" width="2.90" height="3.10" rx="1.02" fill="#f6f6f6" transform="rotate(45.0 7 7)"/><rect x="5.55" y="0.40" width="2.90" height="3.10" rx="1.02" fill="#f6f6f6" transform="rotate(90.0 7 7)"/><rect x="5.55" y="0.40" width="2.90" height="3.10" rx="1.02" fill="#f6f6f6" transform="rotate(135.0 7 7)"/><rect x="5.55" y="0.40" width="2.90" height="3.10" rx="1.02" fill="#f6f6f6" transform="rotate(180.0 7 7)"/><rect x="5.55" y="0.40" width="2.90" height="3.10" rx="1.02" fill="#f6f6f6" transform="rotate(225.0 7 7)"/><rect x="5.55" y="0.40" width="2.90" height="3.10" rx="1.02" fill="#f6f6f6" transform="rotate(270.0 7 7)"/><rect x="5.55" y="0.40" width="2.90" height="3.10" rx="1.02" fill="#f6f6f6" transform="rotate(315.0 7 7)"/><circle cx="7" cy="7" r="2.6" fill="#424242"/></g></svg>
<div class="a" style="left:883.5px;top:728px;width:191px;height:27.3px;background:#424242;border-radius:4px"></div>
<div class="t" style="left:883.5px;width:191px;text-align:center;top:734.12px;font-size:12.4px;line-height:16px">Studio Mode</div>
<div class="a" style="left:883.5px;top:759.6px;width:191px;height:27.3px;background:#424242;border-radius:4px"></div>
<div class="t" style="left:883.5px;width:191px;text-align:center;top:765.72px;font-size:12.4px;line-height:16px">Settings</div>
<div class="a" style="left:883.5px;top:791px;width:191px;height:27.3px;background:#424242;border-radius:4px"></div>
<div class="t" style="left:883.5px;width:191px;text-align:center;top:797.12px;font-size:12.4px;line-height:16px">Exit</div>
<div class="a" style="left:1px;top:823px;width:1078px;height:23px;background:#212121"></div>
<svg class="a" style="left:678px;top:826px;overflow:visible" width="23" height="18" viewBox="0 0 23 18"><g transform="translate(0.000 0.000)"><g fill="none" stroke="#9e9e9a" stroke-width="1.9" stroke-linecap="round">
<path d="M5.2 3.2Q1.2 9 5.2 14.8"/><path d="M16.8 3.2Q20.8 9 16.8 14.8"/>
<path d="M8.0 5.6Q5.6 9 8.0 12.4"/><path d="M14.0 5.6Q16.4 9 14.0 12.4"/></g>
<circle cx="11" cy="9" r="3.5" fill="#9e9e9a"/><path d="M18.5 1.5L3.5 16" stroke="#222" stroke-width="3.4"/><path d="M18.3 1.7L3.7 15.8" stroke="#9e9e9a" stroke-width="1.6" stroke-linecap="round"/></g></svg>
<div class="t" style="left:703px;top:827.40px;font-size:12.4px;line-height:16px;letter-spacing:-0.55px">LIVE: 00:00:00</div>
<svg class="a" style="left:786px;top:828px;overflow:visible" width="15" height="14" viewBox="0 0 15 14"><g transform="translate(0.000 0.000)"><circle cx="6.5" cy="7" r="4.6" fill="#a2a29e"/><path d="M11.6 1.2L1.4 12" stroke="#222" stroke-width="2.8"/><path d="M11.4 1.4L1.6 11.8" stroke="#a2a29e" stroke-width="1.3" stroke-linecap="round"/></g></svg>
<div class="t" style="left:807px;top:827.40px;font-size:12.4px;line-height:16px;letter-spacing:-0.85px">REC: 00:00:00</div>
<div class="t" style="left:902.5px;top:827.40px;font-size:12.4px;line-height:16px;letter-spacing:-0.6px">CPU: 0.3%, 60.00 fps</div>
<div class="a" style="left:1074px;top:837px;width:2px;height:2px;background:#a0a0a0"></div>
<div class="a" style="left:1071px;top:840px;width:2px;height:2px;background:#a0a0a0"></div>
<div class="a" style="left:1074px;top:840px;width:2px;height:2px;background:#a0a0a0"></div>
<div class="a" style="left:1068px;top:843px;width:2px;height:2px;background:#a0a0a0"></div>
<div class="a" style="left:1071px;top:843px;width:2px;height:2px;background:#a0a0a0"></div>
<div class="a" style="left:1074px;top:843px;width:2px;height:2px;background:#a0a0a0"></div>
</body></html>
